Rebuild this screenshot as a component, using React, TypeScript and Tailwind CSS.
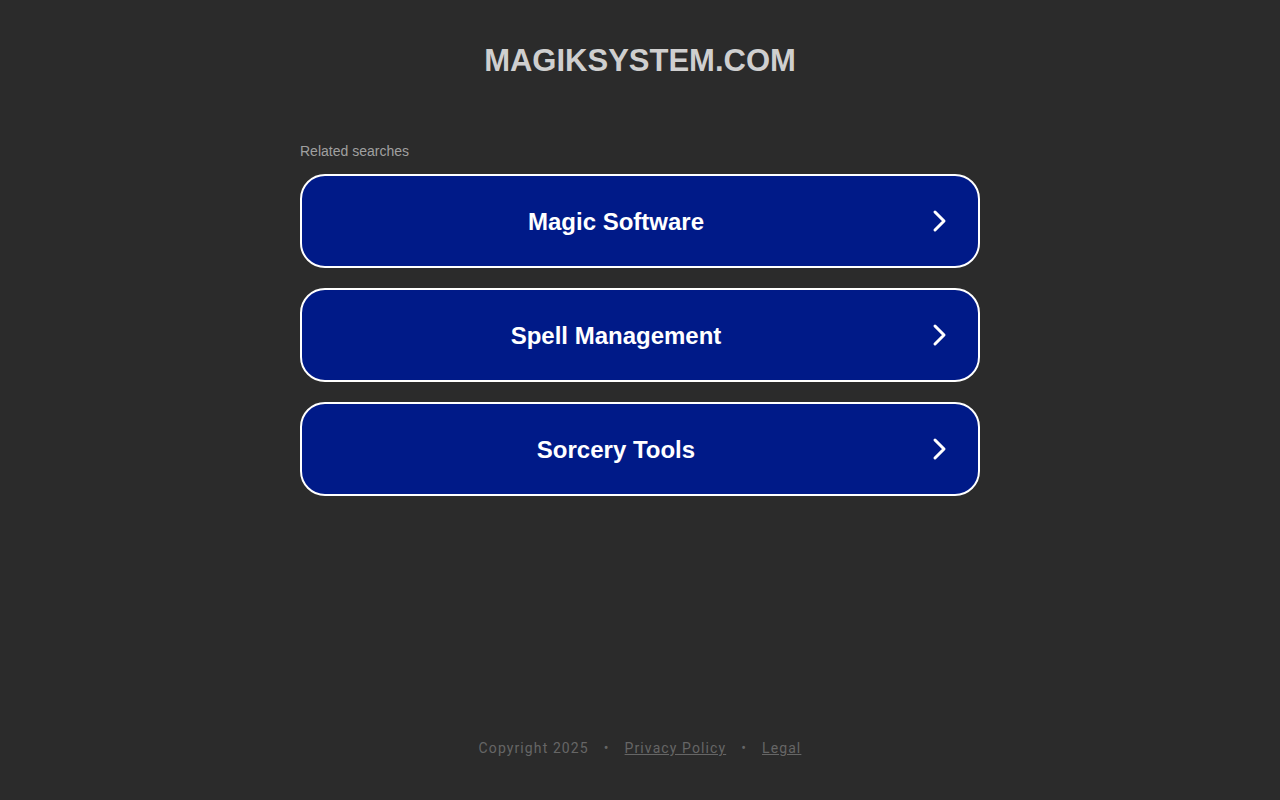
const searches = ['Magic Software', 'Spell Management', 'Sorcery Tools'];

function Chevron() {
  return (
    <svg width="18" height="24" viewBox="0 0 18 24" fill="none" className="shrink-0">
      <path d="M5 3l9 9-9 9" stroke="white" strokeWidth="3" strokeLinecap="round" strokeLinejoin="round" />
    </svg>
  );
}

export default function App() {
  return (
    <div className="min-h-[800px] bg-[#2b2b2b] flex flex-col items-center font-['Liberation_Sans',Arial,sans-serif]">
      <h1 className="mt-[43px] text-[31px] leading-[36px] font-bold uppercase text-[#cfcfcf]">
        magiksystem.com
      </h1>

      <div className="mt-[63px] w-[680px]">
        <div className="text-[14px] leading-[18px] text-[#a0a0a0] mb-[14px]">Related searches</div>
        <div className="flex flex-col gap-[20px]">
          {searches.map((s) => (
            <a
              key={s}
              href="#"
              className="h-[94px] rounded-[25px] border-2 border-white bg-[#001a88] flex items-center pr-[30px]"
            >
              <span className="flex-1 text-center text-[24px] font-bold text-white pt-[2px]">{s}</span>
              <Chevron />
            </a>
          ))}
        </div>
      </div>

      <footer className="mt-auto mb-[41px] flex items-center gap-[15px] text-[14px] tracking-[1.1px] text-[#666] font-['Roboto',sans-serif]">
        <span>Copyright 2025</span>
        <span>•</span>
        <a href="#" className="underline">Privacy Policy</a>
        <span>•</span>
        <a href="#" className="underline">Legal</a>
      </footer>
    </div>
  );
}
